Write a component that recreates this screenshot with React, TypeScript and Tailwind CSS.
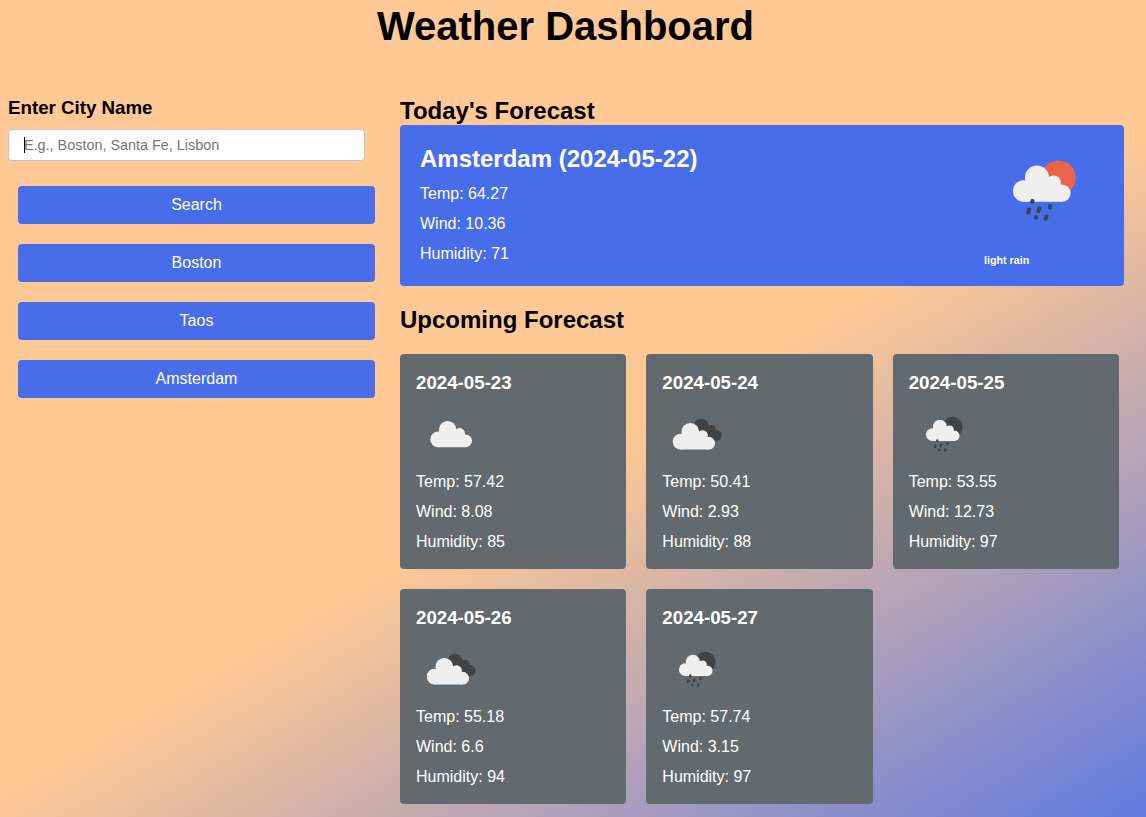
import React from "react";

type IconKind = "cloud" | "clouds" | "rainDay" | "rainNight";

function Cloud() {
  return (
    <>
      <circle cx="10.8" cy="25.4" r="10.8" />
      <circle cx="24" cy="12.1" r="12.1" />
      <circle cx="40.6" cy="17.2" r="7.4" />
      <circle cx="49" cy="27.5" r="8.7" />
      <path d="M10.8 16 H40 L49 26 V36.2 H10.8 Z" />
    </>
  );
}

const drops = [
  [19.3, 35.8, 5],
  [15.7, 45.4, 7],
  [26, 44, 7],
  [37, 41.1, 5],
  [23, 51.8, 4.2],
  [33, 51.8, 6.4],
];

function RainIcon({ disc }: { disc: string }) {
  return (
    <g transform="translate(29 35.6)">
      <circle cx="45.5" cy="12.2" r="17.3" fill={disc} />
      <g fill="#efefef">
        <Cloud />
      </g>
      <g fill="#404244">
        {drops.map(([x, y, h]) => (
          <rect key={`${x}-${y}`} x={x - 2} y={y - h / 2} width="4" height={h} rx="1.7" transform={`rotate(20 ${x} ${y})`} />
        ))}
      </g>
    </g>
  );
}

function WeatherIcon({ kind, className }: { kind: IconKind; className: string }) {
  const rain = kind === "rainDay" || kind === "rainNight";
  return (
    <svg className={className} viewBox={rain ? "0 0 120 120" : "0 0 70 70"}>
      {kind === "rainDay" && <RainIcon disc="#e96449" />}
      {kind === "rainNight" && <RainIcon disc="#404244" />}
      {kind === "cloud" && (
        <g transform="translate(14.3 22) scale(.723)" fill="#efefef">
          <Cloud />
        </g>
      )}
      {kind === "clouds" && (
        <g transform="translate(10.7 24) scale(.733)">
          <g transform="translate(18.9 -5.9) scale(.83)" fill="#404244">
            <Cloud />
          </g>
          <g fill="#efefef">
            <Cloud />
          </g>
        </g>
      )}
    </svg>
  );
}

interface Day {
  date: string;
  icon: IconKind;
  temp: string;
  wind: string;
  humidity: string;
}

const days: Day[] = [
  { date: "2024-05-23", icon: "cloud", temp: "57.42", wind: "8.08", humidity: "85" },
  { date: "2024-05-24", icon: "clouds", temp: "50.41", wind: "2.93", humidity: "88" },
  { date: "2024-05-25", icon: "rainNight", temp: "53.55", wind: "12.73", humidity: "97" },
  { date: "2024-05-26", icon: "clouds", temp: "55.18", wind: "6.6", humidity: "94" },
  { date: "2024-05-27", icon: "rainNight", temp: "57.74", wind: "3.15", humidity: "97" },
];

function Readings({ temp, wind, humidity }: Pick<Day, "temp" | "wind" | "humidity">) {
  return (
    <div className="text-base leading-[30px]">
      <p>Temp: {temp}</p>
      <p>Wind: {wind}</p>
      <p>Humidity: {humidity}</p>
    </div>
  );
}

export default function App() {
  return (
    <div className="h-[817px] overflow-hidden bg-[linear-gradient(150deg,#ffc894_53.9%,#476dea_107.5%)] font-['Liberation_Sans',Arial,sans-serif] text-black">
      <h1 className="w-[1131px] pt-[3px] text-center text-[40px] leading-[46px] font-bold">Weather Dashboard</h1>

      <div className="flex pt-[47px] pl-2">
        <aside className="w-[392px] shrink-0">
          <h3 className="pt-px text-[18.72px] leading-[22px] font-bold">Enter City Name</h3>
          <div className="relative mt-[10px]">
            <input
              type="text"
              placeholder="E.g., Boston, Santa Fe, Lisbon"
              className="block h-8 w-[357px] rounded-[4px] border border-[#bfc5cc] bg-white px-[15px] text-[14.4px] outline-none placeholder:text-[#757575]"
            />
            <span className="absolute top-2 left-4 h-4 w-px bg-black" />
          </div>
          <div className="mt-[25px] ml-[10px] flex w-[357px] flex-col gap-5">
            {["Search", "Boston", "Taos", "Amsterdam"].map((label) => (
              <button key={label} className="h-[38px] rounded-[4px] bg-[#476dea] text-base text-white">
                {label}
              </button>
            ))}
          </div>
        </aside>

        <main className="w-[724px]">
          <h2 className="pt-px text-2xl leading-[28px] font-bold">Today's Forecast</h2>
          <section className="flex h-[161px] justify-between rounded-[4px] bg-[#476dea] pr-5 pl-5 text-white">
            <div className="pt-5">
              <h2 className="mb-[6px] text-2xl leading-[28px] font-bold">Amsterdam (2024-05-22)</h2>
              <Readings temp="64.27" wind="10.36" humidity="71" />
            </div>
            <div className="w-[120px] pt-[5px]">
              <WeatherIcon kind="rainDay" className="block size-[120px]" />
              <h6 className="mt-1 text-[10.72px] leading-[12px] font-bold">light rain</h6>
            </div>
          </section>

          <h2 className="mt-5 text-2xl leading-[28px] font-bold">Upcoming Forecast</h2>
          <div className="mt-5 grid w-[719px] grid-cols-3 gap-5">
            {days.map((day) => (
              <article key={day.date} className="h-[215px] rounded-[4px] bg-[#626a70] px-4 pt-[18px] text-white">
                <h3 className="text-[18.72px] leading-[22px] font-bold">{day.date}</h3>
                <WeatherIcon kind={day.icon} className="mt-[5px] mb-[-2px] block size-[70px]" />
                <Readings temp={day.temp} wind={day.wind} humidity={day.humidity} />
              </article>
            ))}
          </div>
        </main>
      </div>
    </div>
  );
}
